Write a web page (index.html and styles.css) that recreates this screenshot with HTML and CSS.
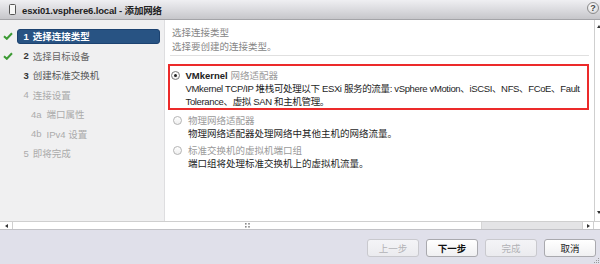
FILE: index.html
```html
<!DOCTYPE html>
<html>
<head>
<meta charset="utf-8">
<link rel="stylesheet" href="styles.css">
</head>
<body>
<div class="dialog">
  <div class="titlebar">
    <span class="ticon"></span>
    <span class="title">esxi01.vsphere6.local - 添加网络</span>
    <span class="help">?</span>
  </div>
  <div class="body">
    <div class="steps">
      <div class="step done"><span class="chk"><svg width="10" height="8" viewBox="0 0 10 8"><path d="M1 4.2 L3.8 6.8 L9 1.2" fill="none" stroke="#3c9a34" stroke-width="2"/></svg></span><span class="box active"><b class="num">1</b><b>选择连接类型</b></span></div>
      <div class="step done"><span class="chk"><svg width="10" height="8" viewBox="0 0 10 8"><path d="M1 4.2 L3.8 6.8 L9 1.2" fill="none" stroke="#3c9a34" stroke-width="2"/></svg></span><span class="box"><b class="num">2</b><span class="lbl">选择目标设备</span></span></div>
      <div class="step"><span class="chk"></span><span class="box"><b class="num">3</b><span class="lbl dark">创建标准交换机</span></span></div>
      <div class="step off"><span class="chk"></span><span class="box"><span class="num">4</span><span>连接设置</span></span></div>
      <div class="step off sub"><span class="chk"></span><span class="box"><span class="num">4a</span><span>端口属性</span></span></div>
      <div class="step off sub"><span class="chk"></span><span class="box"><span class="num">4b</span><span>IPv4 设置</span></span></div>
      <div class="step off"><span class="chk"></span><span class="box"><span class="num">5</span><span>即将完成</span></span></div>
    </div>
    <div class="content">
      <div class="head">
        <div>选择连接类型</div>
        <div>选择要创建的连接类型。</div>
      </div>
      <div class="opt sel">
        <div class="olabel"><span class="radio on"></span><b class="strong">VMkernel</b>&nbsp;<span class="muted">网络适配器</span></div>
        <div class="desc tight">VMkernel TCP/IP 堆栈可处理以下 ESXi 服务的流量: vSphere vMotion、iSCSI、NFS、FCoE、Fault<br>Tolerance、虚拟 SAN 和主机管理。</div>
      </div>
      <div class="opt">
        <div class="olabel"><span class="radio"></span><span class="muted">物理网络适配器</span></div>
        <div class="desc">物理网络适配器处理网络中其他主机的网络流量。</div>
      </div>
      <div class="opt">
        <div class="olabel"><span class="radio"></span><span class="muted">标准交换机的虚拟机端口组</span></div>
        <div class="desc">端口组将处理标准交换机上的虚拟机流量。</div>
      </div>
    </div>
    <div class="vscroll"><span class="tri-up"></span><span class="tri-down"></span></div>
  </div>
  <div class="hscroll">
    <span class="harr lft"><span class="tri-left"></span></span>
    <span class="thumb"><svg width="5" height="5" viewBox="0 0 5 5"><rect x="0" y="0" width="1.6" height="1.6" fill="#8a8a8a"/><rect x="3.2" y="0" width="1.6" height="1.6" fill="#8a8a8a"/><rect x="0" y="3" width="1.6" height="1.6" fill="#8a8a8a"/><rect x="3.2" y="3" width="1.6" height="1.6" fill="#8a8a8a"/></svg></span>
    <span class="track"></span>
    <span class="harr rgt"><span class="tri-right"></span></span>
    <span class="corner"></span>
  </div>
  <div class="footer">
    <button class="btn disabled">上一步</button>
    <button class="btn primary">下一步</button>
    <button class="btn disabled">完成</button>
    <button class="btn">取消</button>
    <svg class="grip" width="6" height="6" viewBox="0 0 6 6"><rect x="4" y="0" width="1" height="1" fill="#999"/><rect x="2" y="2" width="1" height="1" fill="#999"/><rect x="4" y="2" width="1" height="1" fill="#999"/><rect x="0" y="4" width="1" height="1" fill="#999"/><rect x="2" y="4" width="1" height="1" fill="#999"/><rect x="4" y="4" width="1" height="1" fill="#999"/></svg>
  </div>
</div>
</body>
</html>
```
FILE: styles.css
```css
* { box-sizing: border-box; }
html, body { margin: 0; padding: 0; }
body {
  font-family: "Liberation Sans", "Noto Sans CJK SC", sans-serif;
  font-size: 9.5px;
  color: #222;
  background: #fff;
}
.dialog {
  width: 600px;
  height: 264px;
  display: flex;
  flex-direction: column;
  overflow: hidden;
}
.titlebar {
  height: 20px;
  flex: none;
  display: flex;
  align-items: center;
  background: linear-gradient(#efeff2, #d9d9dd 55%, #c6c6ca);
  border-bottom: 1px solid #a4a4a8;
}
.ticon {
  width: 7px;
  height: 11px;
  margin-left: 9px;
  margin-right: 6px;
  border: 1.5px solid #555;
  border-radius: 1.5px;
  background: #f6f6f6;
}
.title {
  font-weight: bold;
  color: #222;
  letter-spacing: -0.15px;
}
.help {
  margin-left: auto;
  margin-right: 1px;
  align-self: flex-start;
  margin-top: 2px;
  width: 12px;
  height: 12px;
  border-radius: 50%;
  border: 1px solid #8c8c8c;
  background: radial-gradient(circle at 40% 35%, #ffffff, #cfcfd2);
  color: #444;
  font-weight: bold;
  font-size: 9px;
  line-height: 10px;
  text-align: center;
}
.body {
  height: 201px;
  flex: none;
  display: flex;
}
.steps {
  width: 165px;
  flex: none;
  background: #f0f0f1;
  border-right: 1px solid #dedee0;
  padding-top: 6.25px;
}
.step {
  height: 19.5px;
  display: flex;
  align-items: center;
}
.chk {
  width: 17px;
  flex: none;
  display: flex;
  align-items: center;
  padding-left: 3px;
}
.box {
  width: 143px;
  height: 15px;
  border-radius: 3px;
  display: flex;
  align-items: center;
  padding-left: 6.5px;
  color: #666;
}
.box.active {
  background: #285383;
  border: 1px solid #1c4270;
  padding-left: 5.5px;
  color: #fff;
}
.num { margin-right: 4px; color: #333; }
.active .num { color: #fff; }
.lbl { color: #666; }
.lbl.dark { color: #555; }
.off .box, .off .num { color: #ababab; }
.sub .box { padding-left: 14px; }
.sub .num { margin-right: 5px; }
.content {
  flex: 1;
  min-width: 0;
  padding: 0 5px 0 3px;
  background: #fff;
}
.head {
  margin-left: 2px;
  padding: 6px 0 1px 2px;
  line-height: 14px;
  color: #858585;
  border-bottom: 1px solid #e0e0e0;
  margin-bottom: 8px;
}
.opt {
  padding: 4px 0 0 3px;
  line-height: 13px;
  border: 2px solid transparent;
  border-top-width: 0;
  border-bottom-width: 0;
}
.opt.sel {
  border: 2px solid #ec2a2a;
  padding: 3px 0 0 0.5px;
}
.olabel {
  display: flex;
  align-items: center;
  height: 13px;
}
.radio {
  width: 9px;
  height: 9px;
  border-radius: 50%;
  border: 1px solid #b4b4b4;
  background: linear-gradient(#fff, #efefef);
  margin-right: 6px;
  flex: none;
  display: flex;
  align-items: center;
  justify-content: center;
}
.radio.on { border-color: #7a7a7a; }
.radio.on::after {
  content: "";
  width: 3px;
  height: 3px;
  border-radius: 50%;
  background: #222;
}
.strong { color: #222; }
.muted { color: #9a9a9a; }
.desc {
  padding-left: 15px;
  white-space: nowrap;
  color: #1e1e1e;
}
.desc.tight { letter-spacing: -0.35px; }
.vscroll {
  width: 6px;
  flex: none;
  border-left: 1px solid #cfcfcf;
  background: #fff;
  display: flex;
  flex-direction: column;
  justify-content: space-between;
  padding: 5px 0 7px 1.5px;
}
.tri-up {
  width: 0; height: 0;
  border-left: 2px solid transparent;
  border-right: 2px solid transparent;
  border-bottom: 3px solid #333;
}
.tri-down {
  width: 0; height: 0;
  border-left: 2px solid transparent;
  border-right: 2px solid transparent;
  border-top: 3px solid #333;
}
.hscroll {
  height: 9px;
  flex: none;
  display: flex;
  border-top: 1px solid #cfcfcf;
  border-bottom: 1px solid #c2c2c6;
  background: #e4e4e6;
}
.harr {
  background: #fff;
  display: flex;
  align-items: center;
  justify-content: center;
}
.harr.lft { width: 13px; border-right: 1px solid #cfcfcf; }
.harr.rgt { width: 12px; border-left: 1px solid #cfcfcf; border-right: 1px solid #cfcfcf; }
.tri-left {
  width: 0; height: 0;
  border-top: 2px solid transparent;
  border-bottom: 2px solid transparent;
  border-right: 3px solid #333;
}
.tri-right {
  width: 0; height: 0;
  border-top: 2px solid transparent;
  border-bottom: 2px solid transparent;
  border-left: 3px solid #333;
}
.thumb {
  width: 469px;
  background: #fff;
  display: flex;
  align-items: center;
  justify-content: center;
  border-right: 1px solid #d6d6d6;
}
.track { flex: 1; }
.corner { width: 6px; background: #fff; }
.footer {
  flex: 1;
  background: #e0e0ea;
  display: flex;
  justify-content: flex-end;
  align-items: flex-start;
  gap: 7px;
  padding: 9px 4px 0 0;
  position: relative;
}
.btn {
  width: 52px;
  height: 18px;
  border: 1px solid #a9a9ae;
  border-radius: 3px;
  background: linear-gradient(#ffffff, #f0f0f2);
  font-family: "Liberation Sans", "Noto Sans CJK SC", sans-serif;
  font-size: 9.5px;
  color: #222;
  padding: 0;
}
.btn.primary { font-weight: bold; color: #111; }
.btn.disabled {
  border-color: #c9c9ce;
  background: linear-gradient(#f4f4f7, #ebebef);
  color: #b2b2b6;
}
.grip {
  position: absolute;
  right: 0;
  bottom: 0;
}
```
